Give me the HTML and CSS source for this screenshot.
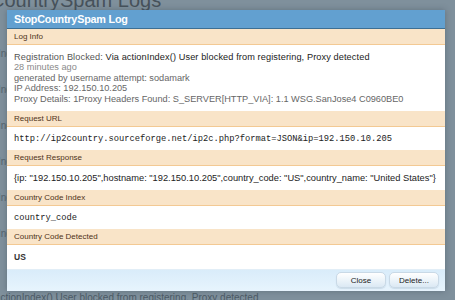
FILE: index.html
```html
<!DOCTYPE html>
<html>
<head>
<meta charset="utf-8">
<link rel="stylesheet" href="styles.css">
</head>
<body>
<div class="page">
  <h1 class="page-title">CountrySpam Logs</h1>
  <ul class="bg-list">
    <li>Index</li>
    <li>Index</li>
    <li>Index</li>
    <li>Index</li>
    <li>Index</li>
    <li>Index</li>
  </ul>
  <div class="bg-foot">actionIndex() User blocked from registering, Proxy detected</div>
</div>

<div class="dialog">
  <div class="dlg-title">StopCountrySpam Log</div>

  <div class="sec-head">Log Info</div>
  <div class="sec-body info">
    <div class="l1"><span class="lbl">Registration Blocked:</span> Via actionIndex() User blocked from registering, Proxy detected</div>
    <div class="ago">28 minutes ago</div>
    <div>generated by username attempt: sodamark</div>
    <div>IP Address: 192.150.10.205</div>
    <div>Proxy Details: 1Proxy Headers Found: S_SERVER[HTTP_VIA]: 1.1 WSG.SanJose4 C0960BE0</div>
  </div>

  <div class="sec-head">Request URL</div>
  <div class="sec-body mono">http://ip2country.sourceforge.net/ip2c.php?format=JSON&amp;ip=192.150.10.205</div>

  <div class="sec-head">Request Response</div>
  <div class="sec-body resp">{ip: "192.150.10.205",hostname: "192.150.10.205",country_code: "US",country_name: "United States"}</div>

  <div class="sec-head">Country Code Index</div>
  <div class="sec-body mono">country_code</div>

  <div class="sec-head">Country Code Detected</div>
  <div class="sec-body us">US</div>

  <div class="dlg-foot">
    <button class="btn">Close</button>
    <button class="btn">Delete...</button>
  </div>
</div>
</body>
</html>
```

FILE: styles.css
```css
html, body {
  margin: 0;
  padding: 0;
}
body {
  width: 455px;
  height: 300px;
  overflow: hidden;
  background: #7f909c;
  font-family: "Liberation Sans", Arial, sans-serif;
  position: relative;
}
.page {
  height: 300px;
  display: flex;
  flex-direction: column;
  color: #4a5966;
}
.page-title {
  margin: -12px 0 0 -10px;
  font-size: 20px;
  font-weight: normal;
  color: #47525b;
  line-height: 24px;
}
.bg-list {
  list-style: none;
  margin: 36px 0 0 -2px;
  padding: 0;
  font-size: 10px;
  color: #56656f;
}
.bg-list li {
  height: 36px;
}
.bg-foot {
  margin-top: auto;
  margin-left: -5px;
  font-size: 10px;
  color: #4d5b66;
  line-height: 12px;
  margin-bottom: -4px;
}

.dialog {
  position: absolute;
  left: 7px;
  top: 10px;
  width: 438px;
  height: 281px;
  background: #fff;
  display: flex;
  flex-direction: column;
  box-shadow: 0 0 6px rgba(40, 55, 70, 0.35);
}
.dlg-title {
  height: 18px;
  background: #62a0d0;
  border-bottom: 1px solid #3d6f93;
  color: #fff;
  font-weight: bold;
  font-size: 10.8px;
  line-height: 18px;
  padding-left: 7px;
  letter-spacing: -0.2px;
}
.sec-head {
  height: 15px;
  background: #f9e4c8;
  border-bottom: 1px solid #f3c993;
  color: #4f3319;
  font-size: 8px;
  line-height: 15px;
  padding-left: 7px;
}
.sec-body {
  padding: 0 7px;
  font-size: 9px;
  color: #222;
  height: 24px;
  line-height: 24px;
  white-space: nowrap;
  overflow: hidden;
}
.info {
  height: auto;
  font-size: 9.2px;
  line-height: 10.4px;
  padding-top: 7px;
  padding-bottom: 8px;
  color: #666;
}
.info .l1 {
  color: #222;
  letter-spacing: 0.1px;
}
.info .l1 .lbl {
  color: #555;
}
.info .ago {
  color: #8a8a8a;
}
.mono {
  font-family: "Liberation Mono", "Courier New", monospace;
  font-size: 8.75px;
  color: #222;
}
.resp {
  font-size: 9.3px;
}
.us {
  font-weight: bold;
  font-size: 8.5px;
  color: #333;
}
.dlg-foot {
  margin-top: auto;
  height: 22px;
  background: linear-gradient(#d9ecfa, #e7f4fd);
  display: flex;
  justify-content: flex-end;
  align-items: center;
  gap: 3px;
  padding-right: 6px;
  border-top: 1px solid #e2eef7;
}
.btn {
  width: 50px;
  height: 16px;
  padding: 0;
  border: 1px solid #c9d9e6;
  border-radius: 5px;
  background: linear-gradient(#ffffff, #dbe9f4);
  font-family: "Liberation Sans", Arial, sans-serif;
  font-size: 8px;
  color: #222;
  box-shadow: 0 1px 1px rgba(100, 130, 160, 0.2);
}
```
